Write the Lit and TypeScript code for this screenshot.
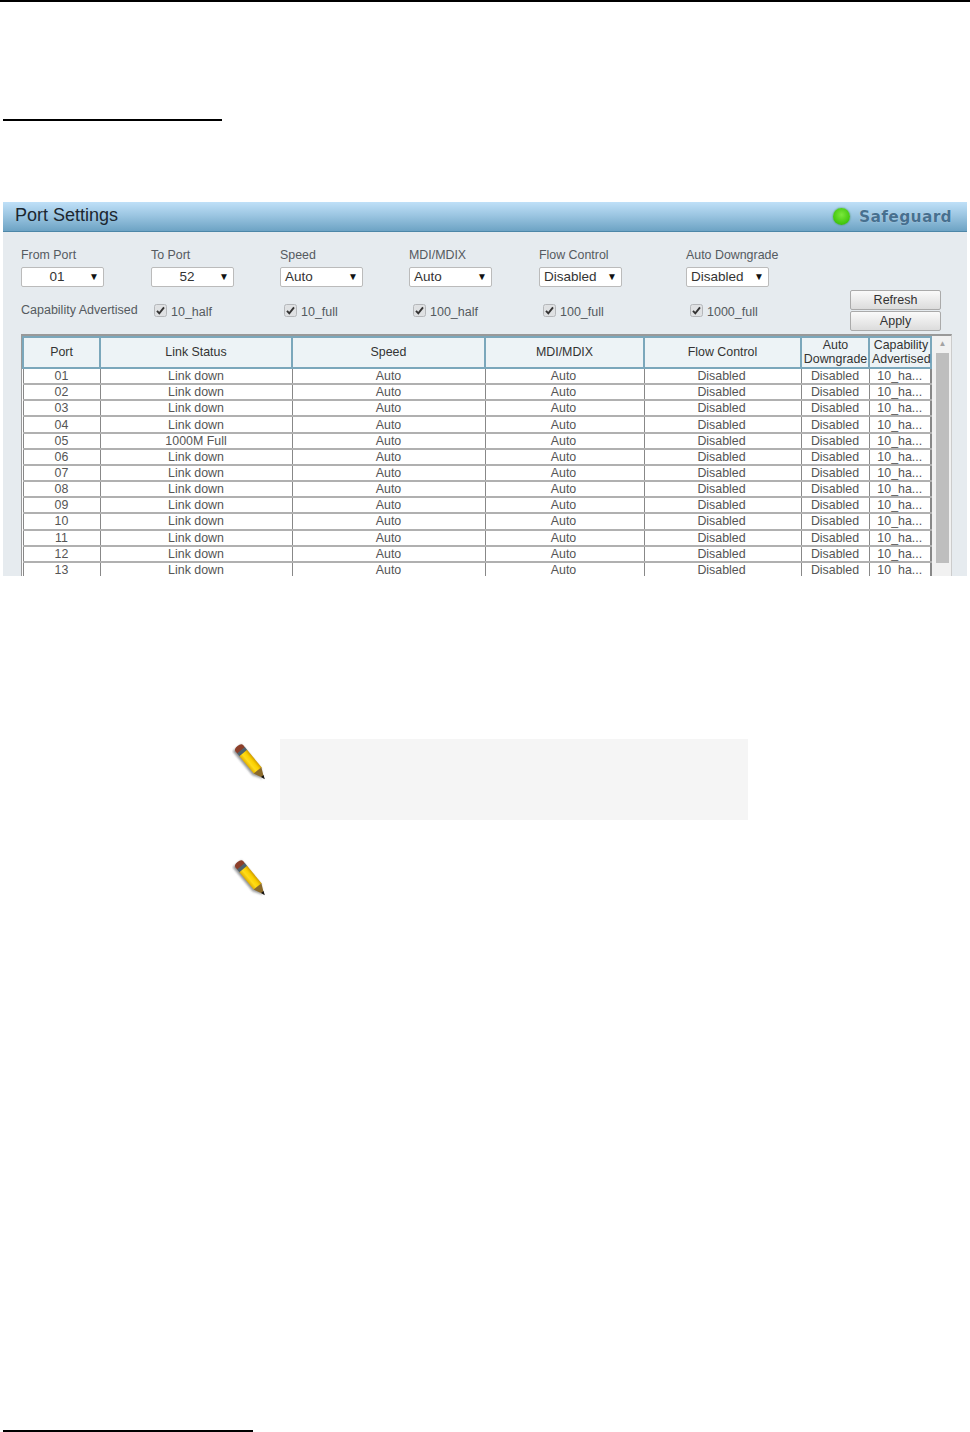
import { LitElement, html, css, svg } from "lit";
import { customElement } from "lit/decorators.js";

const ports = ["01","02","03","04","05","06","07","08","09","10","11","12","13"];
const pencil = svg`<svg class="pencil" width="36" height="44" viewBox="0 0 36 44">
  <defs>
    <linearGradient id="body" x1="0" y1="0" x2="1" y2="0"><stop offset="0" stop-color="#e0ae00"/><stop offset=".35" stop-color="#ffdc1a"/><stop offset=".7" stop-color="#fad000"/><stop offset="1" stop-color="#d09c00"/></linearGradient>
    <filter id="soft" x="-30%" y="-30%" width="160%" height="160%"><feGaussianBlur stdDeviation="0.8"/></filter>
  </defs>
  <g transform="translate(5.500 7) rotate(-39.500)">
    <path d="M-7 1 L4 1 L4 32 L-1.500 41 L-7 32 Z" fill="#77797c" opacity=".8" filter="url(#soft)"/>
    <path d="M-5 3 Q-5 0 0 0 Q5 0 5 3 L5 6 L-5 6 Z" fill="#8c3f2a"/>
    <rect x="-5" y="5.500" width="10" height="4" fill="#4e626c"/>
    <rect x="-5" y="9" width="10" height="23" fill="url(#body)"/>
    <path d="M-5 31.500 L5 31.500 L0 42 Z" fill="#8b6a2a"/>
    <path d="M-1.600 39 L1.600 39 L0 43 Z" fill="#141414"/>
  </g>
</svg>`;
const check = svg`<svg class="chk" width="13" height="13" viewBox="0 0 13 13">
  <rect x=".5" y=".5" width="12" height="12" rx="2" fill="#dfe1e3" stroke="#b5b7ba"/>
  <path d="M3 6.800 L5.300 9.300 L10 3.300" fill="none" stroke="#333" stroke-width="1.900"/>
</svg>`;

@customElement("app-root")
export class AppRoot extends LitElement {
  static styles = css`
    :host { display: block; width: 970px; height: 1432px; background: #fff; font-family: "Liberation Sans", Arial, sans-serif; overflow: hidden; }
    .page { display: flex; flex-direction: column; height: 1432px; }
    .top { height: 2px; background: #000; flex: none; }
    .rule { height: 2px; background: #000; margin-left: 3px; flex: none; }
    .r1 { width: 219px; margin-top: 117px; }
    .panel { margin: 81px 3px 0 3px; height: 374px; background: #e6ebef; overflow: hidden; flex: none; }
    .head { height: 30px; box-sizing: border-box; border-bottom: 1px solid #4d87a8; background: linear-gradient(#bfe0f8, #9cc6e2 45%, #6da3c4); display: flex; align-items: center; padding: 0 15px 0 12px; }
    .title { font-size: 18px; color: #1c2730; flex: 1; padding-bottom: 3px; }
    .dot { width: 17px; height: 17px; border-radius: 50%; background: radial-gradient(circle at 50% 40%, #7be83c, #44c80f 65%, #2f9e10); box-shadow: 0 0 2px #3d8a50; margin-right: 9px; }
    .safe { font-family: "DejaVu Sans", sans-serif; font-size: 15.500px; font-weight: bold; color: #47708f; letter-spacing: .3px; text-shadow: 0 0 1px #d5e8f5; }
    .form { position: relative; height: 102px; padding: 16px 0 0 18px; box-sizing: border-box; }
    .grid { display: grid; grid-template-columns: 130px 129px 129px 130px 147px 150px; color: #555a60; font-size: 12.400px; }
    .lab { line-height: 14px; height: 19px; }
    .sel { box-sizing: border-box; width: 83px; height: 20px; background: #fff; border: 1px solid #bbb; border-radius: 2px; color: #333; font-size: 13.500px; line-height: 18px; position: relative; padding-left: 4px; }
    .sel.num { text-align: center; padding: 0 11px 0 0; }
    .sel i { position: absolute; right: 4px; top: 0; font-style: normal; font-size: 10px; color: #111; }
    .caps { display: grid; grid-template-columns: 130px 130px 129px 130px 147px 150px; margin-top: 14px; font-size: 12.500px; color: #555a60; align-items: center; height: 18px; }
    .cap { display: flex; align-items: center; margin-left: 3px; }
    .chk { flex: none; margin: 0 4px 0 0; }
    .cap span { padding-top: 4px; }
    .btns { position: absolute; right: 26px; top: 58px; display: flex; flex-direction: column; gap: 1px; }
    .btn { width: 91px; height: 20px; box-sizing: border-box; border: 1px solid #aaa; border-radius: 2px; background: linear-gradient(#fafafa, #dcdcdc); font-size: 12.500px; line-height: 19px; text-align: center; color: #333; }
    .tbl { position: relative; margin: 0 15px 0 18px; height: 242px; box-sizing: border-box; border-top: 2px solid #999; border-left: 1px solid #999; border-right: 1px solid #ccc; background: #fff; overflow: hidden; display: flex; }
    table { border-collapse: collapse; table-layout: fixed; width: 908px; height: fit-content; font-size: 12.400px; color: #555; flex: none; border-right: 2px solid #888; }
    th { height: 31px; box-sizing: border-box; padding: 0; font-weight: normal; color: #333; line-height: 14px; background: #edf3f6; border: 2px solid #7ba7bb; }
    th span { display: block; transform: translateY(-1px); }
    th.auto { padding-left: 1px; }
    th.capa { padding-left: 2px; }
    td { height: 16.170px; box-sizing: border-box; padding: 0; text-align: center; border-right: 1px solid #888; border-bottom: 2px solid #b0b0b0; line-height: 14px; background: #fff; white-space: nowrap; }
    td.mdi { padding-right: 2px; }
    td.flow { padding-right: 2px; }
    .first { border-left: 1px solid #888; }
    .sb { flex: 1; background: #f1f1f1; display: flex; flex-direction: column; align-items: center; padding: 0 1px 0 3px; box-sizing: border-box; }
    .up { height: 17px; font-size: 8px; color: #a3a3a3; line-height: 16px; }
    .thumb { width: 13px; height: 210px; background: #bebebe; flex: none; }
    .note { display: flex; align-items: flex-start; flex: none; margin: 0 0 0 232px; }
    .n1 { margin-top: 163px; }
    .n2 { margin-top: 35px; }
    .pencil { display: block; flex: none; }
    .box { width: 468px; height: 81px; background: #f5f5f5; margin-left: 12px; flex: none; }
    .spacer { flex: 1; }
  `;

  render() {
    const cols = [77, 192, 193, 159, 157, 68, 62];
    const heads = ["Port", "Link Status", "Speed", "MDI/MDIX", "Flow Control"];
    return html`<div class="page">
      <div class="top"></div>
      <div class="rule r1"></div>
      <div class="panel">
        <div class="head">
          <div class="title">Port Settings</div>
          <div class="dot"></div>
          <div class="safe">Safeguard</div>
        </div>
        <div class="form">
          <div class="grid">
            ${[["From Port","01",1],["To Port","52",1],["Speed","Auto",0],["MDI/MDIX","Auto",0],["Flow Control","Disabled",0],["Auto Downgrade","Disabled",0]].map(([l,v,n]) => html`<div>
              <div class="lab">${l}</div>
              <div class="sel ${n ? "num" : ""}">${v}<i>▼</i></div>
            </div>`)}
          </div>
          <div class="caps">
            <div>Capability Advertised</div>
            ${["10_half","10_full","100_half","100_full","1000_full"].map(c => html`<div class="cap">${check}<span>${c}</span></div>`)}
          </div>
          <div class="btns"><div class="btn">Refresh</div><div class="btn">Apply</div></div>
        </div>
        <div class="tbl">
          <table>
            <colgroup>${cols.map(w => html`<col style="width:${w}px">`)}</colgroup>
            <thead><tr>
              ${heads.map(h => html`<th><span>${h}</span></th>`)}
              <th class="auto"><span>Auto<br>Downgrade</span></th><th class="capa"><span>Capability<br>Advertised</span></th>
            </tr></thead>
            <tbody>
              ${ports.map((p, i) => html`<tr>
                <td class="first">${p}</td>
                <td>${i === 4 ? "1000M Full" : "Link down"}</td>
                <td>Auto</td><td class="mdi">Auto</td><td class="flow">Disabled</td><td>Disabled</td><td>10_ha...</td>
              </tr>`)}
            </tbody>
          </table>
          <div class="sb"><div class="up">▲</div><div class="thumb"></div></div>
        </div>
      </div>
      <div class="note n1">${pencil}<div class="box"></div></div>
      <div class="note n2">${pencil}</div>
      <div class="spacer"></div>
      <div class="rule" style="width:250px"></div>
    </div>`;
  }
}
